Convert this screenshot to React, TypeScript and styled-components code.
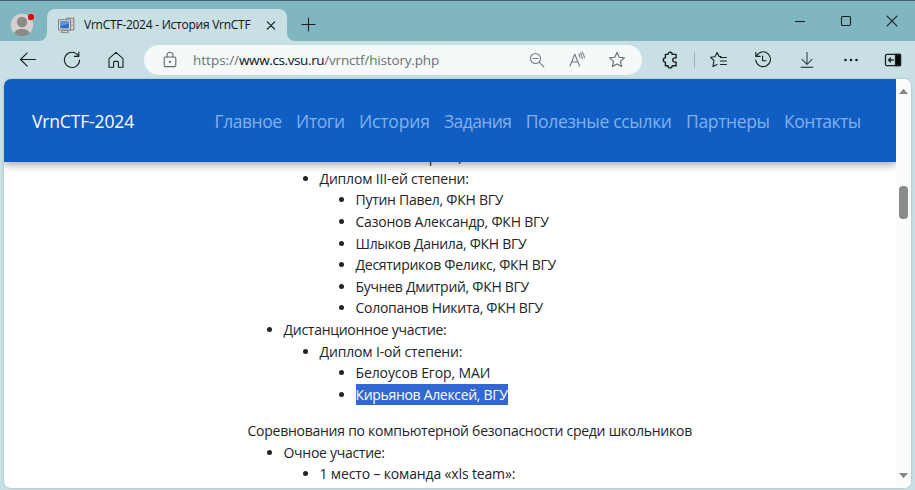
import React from "react";
import styled, { createGlobalStyle, css } from "styled-components";

const GlobalStyle = createGlobalStyle`
  * { box-sizing: border-box; }
  body { margin: 0; background: #c8dfe3; font-family: "Open Sans", "Noto Sans", sans-serif; overflow: hidden; }
  ul { margin: 0; }
`;

const Window = styled.div`
  display: flex;
  flex-direction: column;
  width: 915px;
  height: 490px;
  overflow: hidden;
  background: #c8dfe3;
`;

const TitleBar = styled.div`
  display: flex;
  flex: none;
  align-items: flex-end;
  height: 41px;
  background: #80b6bf;
  border-top: 1px solid #405f66;
`;

const TabFoot = styled.div`
  height: 40px;
  background: linear-gradient(#80b6bf, #80b6bf) top / 100% 24px no-repeat, #c8dfe3;
`;

const Profile = styled.div`
  display: flex;
  width: 47px;
  height: 40px;
  padding: 11px 0 0 10px;
  background: #80b6bf;
  border-bottom-right-radius: 8px;
`;

const Tab = styled.div`
  display: flex;
  align-items: center;
  width: 240px;
  height: 32px;
  padding: 0 11px 0 11px;
  background: #c8dfe3;
  border-radius: 8px 8px 0 0;
`;

const TabTitle = styled.span`
  flex: 1;
  margin-left: 9px;
  font-size: 12px;
  line-height: 18px;
  letter-spacing: -0.25px;
  white-space: nowrap;
  color: #0c1416;
`;

const NewTabArea = styled.div`
  display: flex;
  width: 490px;
  height: 40px;
  padding: 15px 0 0 13px;
  background: #80b6bf;
  border-bottom-left-radius: 8px;
`;

const Controls = styled.div`
  display: flex;
  align-self: flex-start;
  height: 40px;
`;

const Control = styled.div`
  display: flex;
  align-items: center;
  justify-content: center;
  width: 46px;
  height: 40px;
`;

const Toolbar = styled.div`
  display: flex;
  flex: none;
  align-items: center;
  height: 38px;
  padding-left: 6px;
`;

const ToolButton = styled.div<{ $w?: number }>`
  display: flex;
  flex: none;
  align-items: center;
  justify-content: center;
  width: ${(p) => p.$w ?? 44}px;
  height: 30px;
`;

const AddressBar = styled.div`
  display: flex;
  flex: none;
  align-items: center;
  width: 498px;
  height: 30px;
  margin: 0 6px;
  padding: 0 5px 0 7px;
  border-radius: 15px;
  background: #f4f9fa;
`;

const Url = styled.div`
  flex: 1;
  padding-left: 4px;
  font-size: 13.5px;
  line-height: 20px;
  white-space: nowrap;
  color: #6c7173;
`;

const UrlPart = styled.span<{ $ls: number; $host?: boolean }>`
  letter-spacing: ${(p) => p.$ls}px;
  ${(p) => p.$host && css`color: #101414;`}
`;

const Divider = styled.div`
  flex: none;
  width: 1px;
  height: 16px;
  margin: 0 2px;
  background: #9eb3b7;
`;

const Viewport = styled.div`
  display: flex;
  flex: none;
  width: 907px;
  height: 409px;
  margin-left: 4px;
  overflow: hidden;
  border-radius: 7px;
  background: #fff;
  box-shadow: 0 0 2px #8fabb0;
`;

const Page = styled.div`
  display: flex;
  flex: 1;
  flex-direction: column;
  overflow: hidden;
`;

const Header = styled.header`
  position: relative;
  z-index: 1;
  display: flex;
  flex: none;
  align-items: center;
  height: 83px;
  padding: 1px 0 0 28px;
  background: #115ec3;
  box-shadow: 0 3px 8px rgba(0, 0, 0, 0.34);
`;

const Brand = styled.a<{ $ls: number }>`
  flex: none;
  width: 182.5px;
  font-size: 17.5px;
  line-height: 27px;
  letter-spacing: ${(p) => p.$ls}px;
  color: #fff;
`;

const Nav = styled.nav`
  display: flex;
  gap: 14.4px;
`;

const NavLink = styled.a<{ $ls: number }>`
  font-size: 17.5px;
  line-height: 27px;
  letter-spacing: ${(p) => p.$ls}px;
  white-space: nowrap;
  color: #82b0ea;
`;

const Article = styled.main`
  flex: 1;
  margin-top: -15.8px;
  padding-left: 243.5px;
  font-size: 14px;
  line-height: 21.6px;
  white-space: nowrap;
  color: #212529;
`;

const List = styled.ul`
  padding-left: 36px;
  list-style: disc;
`;

const Indent = styled.div`
  padding-left: 36px;
`;

const Text = styled.span<{ $ls: number; $selected?: boolean }>`
  letter-spacing: ${(p) => p.$ls}px;
  ${(p) =>
    p.$selected &&
    css`
      display: inline-block;
      height: 21.6px;
      vertical-align: top;
      color: #fff;
      background: #3367d1;
    `}
`;

const Paragraph = styled.p`
  margin: 14.7px 0 0;
`;

const Scrollbar = styled.div`
  display: flex;
  flex: none;
  flex-direction: column;
  align-items: center;
  width: 15px;
  padding: 9px 0 9px;
  background: #fcfcfc;
`;

const Thumb = styled.div`
  width: 9px;
  height: 33px;
  margin: 91px 0 auto;
  border-radius: 4px;
  background: #8a8a8a;
`;

type IconProps = { size?: number; color?: string; children: React.ReactNode; sw?: number };
const Icon = ({ size = 18, color = "#172023", sw = 1.1, children }: IconProps) => (
  <svg width={size} height={size} viewBox={`0 0 ${size} ${size}`} fill="none" stroke={color} strokeWidth={sw} strokeLinecap="round" strokeLinejoin="round">
    {children}
  </svg>
);

const Avatar = () => (
  <svg width="26" height="26" viewBox="0 0 26 26">
    <defs>
      <clipPath id="face"><circle cx="12" cy="13" r="11.2" /></clipPath>
    </defs>
    <circle cx="12" cy="13" r="11.2" fill="#d3d0cd" />
    <g clipPath="url(#face)" fill="#8c8a88">
      <circle cx="12" cy="10" r="5.2" />
      <ellipse cx="12" cy="22" rx="8" ry="5.2" />
    </g>
    <circle cx="21" cy="5" r="3.8" fill="#d3d0cd" />
    <circle cx="21" cy="5" r="3.2" fill="#d20f16" />
  </svg>
);

const Favicon = () => (
  <svg width="17" height="17" viewBox="0 0 17 17">
    <path d="M8.5 1.2h7.3v11.6H8.5z" fill="#e8e6e2" stroke="#77746f" />
    <path d="M13.5 3.5h1M13.5 5.5h1M13.5 7.5h1M13.5 9.5h1" stroke="#8e8b86" />
    <path d="M.6 2.8h12v10.2H.6z" fill="#f1efeb" stroke="#77746f" />
    <path d="M2.2 4.3h8.9v7.2H2.2z" fill="#2f6fc2" />
    <path d="M2.2 4.3h8.9v2.2L2.2 9.3z" fill="#5b97de" />
    <path d="M4.5 13.4h4.6l1.4 2h-7.4z" fill="#dedbd5" stroke="#77746f" strokeWidth=".8" />
  </svg>
);

const STAR = "M9 1.4l2.2 4.8 5.2.6-3.9 3.5 1.1 5.2L9 12.9l-4.6 2.6 1.1-5.2-3.9-3.5 5.2-.6z";

const nav: [string, number][] = [
  ["Главное", -0.45],
  ["Итоги", -0.44],
  ["История", -0.19],
  ["Задания", -0.63],
  ["Полезные ссылки", -0.32],
  ["Партнеры", -0.36],
  ["Контакты", -0.55],
];

const thirdDegree: [string, number][] = [
  ["Путин Павел, ФКН ВГУ", -0.27],
  ["Сазонов Александр, ФКН ВГУ", -0.21],
  ["Шлыков Данила, ФКН ВГУ", -0.3],
  ["Десятириков Феликс, ФКН ВГУ", -0.28],
  ["Бучнев Дмитрий, ФКН ВГУ", -0.29],
  ["Солопанов Никита, ФКН ВГУ", -0.29],
];

export default function App() {
  return (
    <Window>
      <GlobalStyle />
      <TitleBar>
        <TabFoot><Profile><Avatar /></Profile></TabFoot>
        <Tab>
          <Favicon />
          <TabTitle>VrnCTF-2024 - История VrnCTF</TabTitle>
          <Icon size={10} sw={1.2}><path d="M1.3 1.8l7.4 7.4M8.7 1.8L1.3 9.2" /></Icon>
        </Tab>
        <TabFoot>
          <NewTabArea><Icon size={16}><path d="M8.5 2v13M2 8.5h13" /></Icon></NewTabArea>
        </TabFoot>
        <Controls>
          <Control><Icon size={12}><path d="M1 6.5h10" strokeLinecap="butt" /></Icon></Control>
          <Control><Icon size={12}><rect x="1.5" y="1.5" width="9" height="9" rx="1.2" /></Icon></Control>
          <Control><Icon size={12}><path d="M1.2 1.2l9.6 9.6M10.8 1.2l-9.6 9.6" /></Icon></Control>
        </Controls>
      </TitleBar>
      <Toolbar>
        <ToolButton><Icon><path d="M16.5 8.5H1.5M8.2 1.8L1.5 8.5l6.7 6.7" /></Icon></ToolButton>
        <ToolButton>
          <Icon><path d="M15.2 4.5A7.6 7.6 0 1 0 16.6 9M15.8 1v4.4h-4.4" /></Icon>
        </ToolButton>
        <ToolButton>
          <Icon><path d="M2 7.6L9 1.4l7 6.2v8.6h-4.6v-4.8a1 1 0 0 0-1-1H7.6a1 1 0 0 0-1 1v4.8H2z" /></Icon>
        </ToolButton>
        <AddressBar>
          <ToolButton $w={38}>
            <Icon color="#64696b"><rect x="3.2" y="6" width="11.6" height="9.6" rx="1.4" /><path d="M6 6V4.2a3 3 0 0 1 6 0V6" /><circle cx="9" cy="10.8" r=".6" fill="#64696b" /></Icon>
          </ToolButton>
          <Url>
            <UrlPart $ls={0}>https://</UrlPart>
            <UrlPart $ls={-0.39} $host>www.cs.vsu.ru</UrlPart>
            <UrlPart $ls={-0.16}>/vrnctf/history.php</UrlPart>
          </Url>
          <ToolButton $w={40}>
            <Icon size={16} color="#74797b"><circle cx="6.5" cy="6.5" r="5" /><path d="M10.2 10.2l4.6 4.6M4 6.5h5" /></Icon>
          </ToolButton>
          <ToolButton $w={40}>
            <Icon size={18} color="#74797b"><path d="M2 15L6.8 3.2 11.6 15M3.7 11h6.2M10.8 3.4a4.6 4.6 0 0 1 1.2 3.4M12.2 1.8a7.6 7.6 0 0 1 2 5.6M14 1a9 9 0 0 1 2.4 5.6" /></Icon>
          </ToolButton>
          <ToolButton $w={40}><Icon color="#65696b"><path d={STAR} /></Icon></ToolButton>
        </AddressBar>
        <ToolButton>
          <Icon sw={1.4}><path d="M4.4 3.4h2.6a2.1 2.1 0 0 1 4.2 0h3.9v3.5h-1.2a2.1 2.1 0 0 0 0 4.2h1.2v3.7h-3.9a2.1 2.1 0 0 1-4.2 0H4.4v-3.7a2.1 2.1 0 0 1 0-4.2z" /></Icon>
        </ToolButton>
        <Divider />
        <ToolButton>
          <Icon><path d="M11 5.5H9.1L7.1 1.4 5 5.7l-4.3.6 3.2 3.2L3 15.6l4-2M10.4 6.5h6M10.4 10h6M10.4 13.5h6" /></Icon>
        </ToolButton>
        <ToolButton>
          <Icon><path d="M2.4 5A7.4 7.4 0 1 1 1.7 9M1.8 1.3V5.4h4.3M8.6 5v4.8H12" /></Icon>
        </ToolButton>
        <ToolButton>
          <Icon><path d="M9 1.3v12M4 8.4l5 5 5-5" stroke="#36464a" /><path d="M3.2 16.2h11.6" /></Icon>
        </ToolButton>
        <ToolButton>
          <Icon><g fill="#172023" stroke="none"><circle cx="3.5" cy="9" r="1.3" /><circle cx="9" cy="9" r="1.3" /><circle cx="14.5" cy="9" r="1.3" /></g></Icon>
        </ToolButton>
        <ToolButton $w={40}>
          <Icon sw={1.3}><rect x="1.5" y="3.3" width="15" height="11.4" rx="1.5" /><path d="M11.5 3.5h5v11h-5z" fill="#060909" /><path d="M9.3 9H4.5M6.5 7L4.5 9l2 2" /></Icon>
        </ToolButton>
      </Toolbar>
      <Viewport>
        <Page>
          <Header>
            <Brand $ls={-0.15}>VrnCTF-2024</Brand>
            <Nav>{nav.map(([t, ls]) => <NavLink key={t} $ls={ls}>{t}</NavLink>)}</Nav>
          </Header>
          <Article>
            <Indent><Indent><List><li><Text $ls={-0.45}>Соколов Сергей, ФКН ВГУ</Text></li></List></Indent></Indent>
            <Indent>
              <List>
                <li>
                  <Text $ls={-0.18}>Диплом III-ей степени:</Text>
                  <List>{thirdDegree.map(([t, ls]) => <li key={t}><Text $ls={ls}>{t}</Text></li>)}</List>
                </li>
              </List>
            </Indent>
            <List>
              <li>
                <Text $ls={-0.28}>Дистанционное участие:</Text>
                <List>
                  <li>
                    <Text $ls={-0.16}>Диплом I-ой степени:</Text>
                    <List>
                      <li><Text $ls={-0.11}>Белоусов Егор, МАИ</Text></li>
                      <li><Text $ls={-0.315} $selected>Кирьянов Алексей, ВГУ</Text></li>
                    </List>
                  </li>
                </List>
              </li>
            </List>
            <Paragraph><Text $ls={-0.255}>Соревнования по компьютерной безопасности среди школьников</Text></Paragraph>
            <List>
              <li>
                <Text $ls={-0.28}>Очное участие:</Text>
                <List><li><Text $ls={-0.15}>1 место – команда «xls team»:</Text></li></List>
              </li>
            </List>
          </Article>
        </Page>
        <Scrollbar>
          <svg width="11" height="7" viewBox="0 0 11 7"><path d="M5.5 .8L10 6H1z" fill="#858585" /></svg>
          <Thumb />
          <svg width="11" height="7" viewBox="0 0 11 7"><path d="M5.5 6.2L1 1h9z" fill="#858585" /></svg>
        </Scrollbar>
      </Viewport>
    </Window>
  );
}
